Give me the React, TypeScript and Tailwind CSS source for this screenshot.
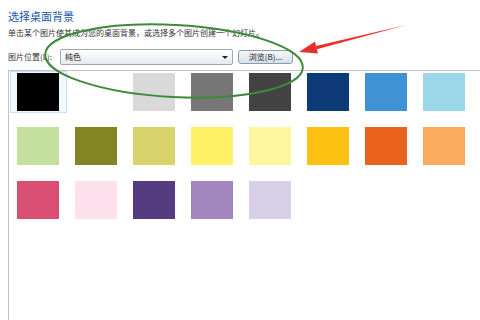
const swatches = [
  '#000000', '#ffffff', '#d9d9d9', '#767676', '#434343', '#0e3b78', '#3f92d3', '#9bd7e9',
  '#c5e09e', '#828522', '#d8d46b', '#fef166', '#fef69c', '#fdc114', '#e9621e', '#fbab5e',
  '#d84f72', '#fde0eb', '#553c80', '#a287bd', '#d8d0e6',
];

const cjk = { fontFamily: "'Noto Sans CJK SC', 'Noto Sans', sans-serif" };

function Annotations() {
  return (
    <svg className="absolute inset-0 pointer-events-none" width="480" height="320" viewBox="0 0 480 320">
      <ellipse
        cx="174"
        cy="61"
        rx="129"
        ry="36"
        transform="rotate(3 174 61)"
        fill="none"
        stroke="#3d8b3a"
        strokeWidth="2"
      />
      <polygon
        points="299,52 318,53.6 316.8,49.3 406,25 316,45.9 315,41.6"
        fill="#e8302a"
      />
    </svg>
  );
}

export default function App() {
  return (
    <div className="relative w-[480px] h-[320px] bg-white flex flex-col pl-[8px] overflow-hidden" style={cjk}>
      <h1 className="pt-[10px] text-[11px] leading-[13px] text-[#2356a8]">选择桌面背景</h1>
      <p className="mt-[5px] text-[8px] leading-[10px] text-[#333]">
        单击某个图片使其成为您的桌面背景，或选择多个图片创建一个幻灯片。
      </p>

      <div className="mt-[11px] flex items-center h-[16px]">
        <span className="w-[52px] text-[8px] text-[#333]">图片位置(L):</span>
        <div className="w-[173px] h-[16px] flex items-center justify-between px-[4px] border border-[#9ea7b3] rounded-[2px] bg-gradient-to-b from-white to-[#e6eaf0]">
          <span className="text-[8px] text-[#222]">纯色</span>
          <span className="w-0 h-0 border-l-[3px] border-r-[3px] border-t-[3px] border-l-transparent border-r-transparent border-t-[#222]" />
        </div>
        <button className="ml-[5px] w-[55px] h-[14px] flex items-center justify-center border border-[#8a9bb0] rounded-[3px] bg-gradient-to-b from-[#f4f7fa] to-[#d8e1eb] text-[8px] text-[#222]">
          浏览(B)...
        </button>
      </div>

      <div className="mt-[5px] flex-1 border-t border-l border-[#c3c3c3] pl-[1px]">
        <div className="grid grid-cols-[repeat(8,57px)] gap-x-[1px] gap-y-[12px]">
          {swatches.map((color, i) => (
            <div
              key={i}
              className={
                i === 0
                  ? 'w-[57px] h-[42px] border border-[#cfe0f3] bg-[#f3f8fd] pl-[6px] pt-[1px]'
                  : 'w-[57px] h-[42px] border border-transparent pl-[6px] pt-[1px]'
              }
            >
              <div className="w-[42px] h-[38px]" style={{ backgroundColor: color }} />
            </div>
          ))}
        </div>
      </div>

      <Annotations />
    </div>
  );
}
